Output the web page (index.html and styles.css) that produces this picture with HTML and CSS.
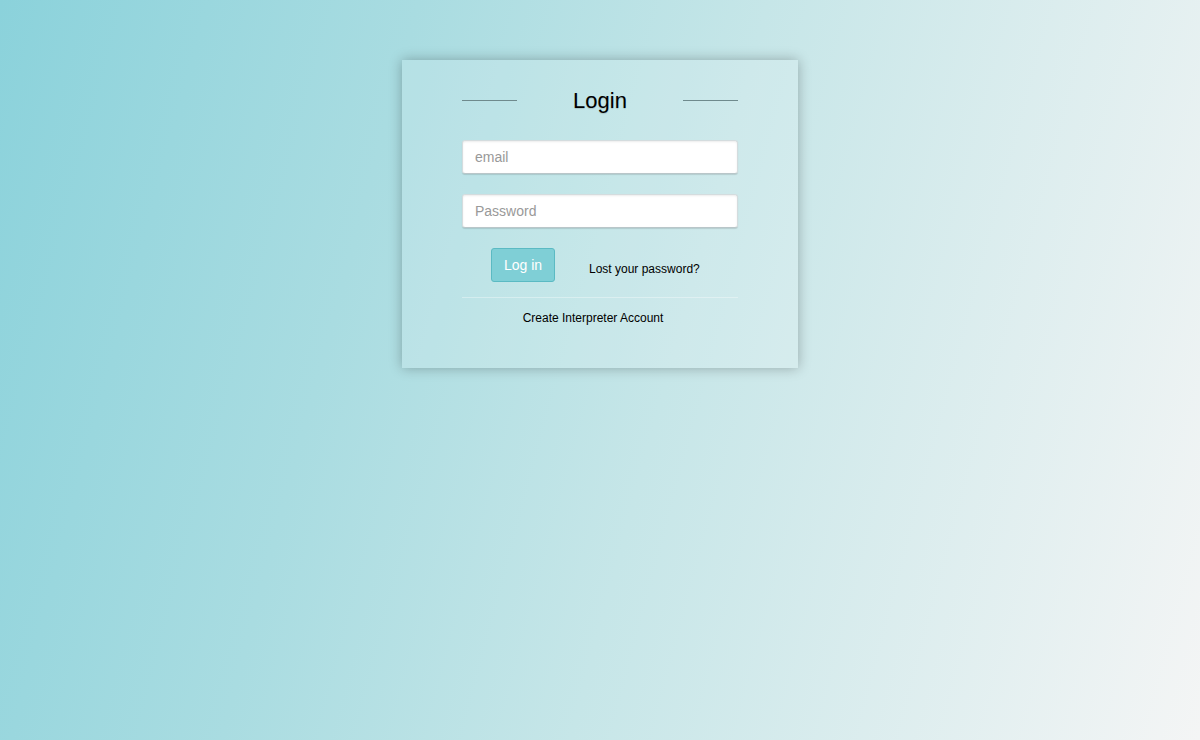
FILE: index.html
```html
<!DOCTYPE html>
<html lang="en">
<head>
<meta charset="utf-8">
<title>Login</title>
<link rel="stylesheet" href="styles.css">
</head>
<body>
<div class="page">
  <form class="card">
    <div class="head">
      <span class="rule"></span>
      <h1 class="title">Login</h1>
      <span class="rule"></span>
    </div>
    <input class="field" type="text" placeholder="email">
    <input class="field" type="password" placeholder="Password">
    <div class="actions">
      <button class="btn" type="button">Log in</button>
      <a class="link lost" href="#">Lost your password?</a>
    </div>
    <div class="sep"></div>
    <div class="create"><a class="link" href="#">Create Interpreter Account</a></div>
  </form>
</div>
</body>
</html>
```
FILE: styles.css
```css
html, body {
  margin: 0;
  height: 100%;
}
body {
  font-family: "Liberation Sans", Arial, sans-serif;
  background: linear-gradient(105deg, #8bd2db 0%, #a9dce1 30%, #c6e6e8 55%, #f4f5f5 100%);
  background-attachment: fixed;
}
.page {
  display: flex;
  justify-content: center;
  padding-top: 60px;
}
.card {
  width: 396px;
  box-sizing: border-box;
  padding: 26px 60px 43px;
  background: rgba(255, 255, 255, 0.14);
  box-shadow: 0 0 12px rgba(0, 0, 0, 0.28);
  display: flex;
  flex-direction: column;
}
.head {
  display: flex;
  align-items: center;
  justify-content: space-between;
  height: 28px;
}
.rule {
  width: 55px;
  height: 1px;
  background: #6f8a8d;
}
.title {
  margin: 0;
  padding-top: 2px;
  font-weight: normal;
  font-size: 22px;
  line-height: 26px;
  color: #000;
  text-shadow: 0 1px 1px rgba(0, 0, 0, 0.15);
}
.field {
  margin: 26px 0 0;
  height: 34px;
  box-sizing: border-box;
  width: 100%;
  padding: 0 12px;
  border: 1px solid #d4dcde;
  border-bottom-color: #b9c6c9;
  border-radius: 3px;
  background: #fff;
  box-shadow: inset 0 1px 2px rgba(0, 0, 0, 0.08), 0 1px 1px rgba(0, 0, 0, 0.12);
  font-family: "Liberation Sans", Arial, sans-serif;
  font-size: 14px;
  color: #333;
  outline: none;
}
.field + .field {
  margin-top: 20px;
}
.field::placeholder {
  color: #999;
}
.actions {
  display: flex;
  align-items: center;
  margin-top: 20px;
  padding-left: 29px;
  gap: 34px;
}
.btn {
  width: 64px;
  height: 34px;
  box-sizing: border-box;
  border: 1px solid #5bbac3;
  border-radius: 3px;
  background: #7fcfd6;
  color: #fff;
  font-family: "Liberation Sans", Arial, sans-serif;
  font-size: 14px;
  padding: 0;
  line-height: 30px;
}
.link {
  color: #000;
  font-size: 12px;
  text-decoration: none;
}
.lost {
  margin-top: 7px;
}
.sep {
  height: 1px;
  margin-top: 15px;
  background: rgba(255, 255, 255, 0.35);
}
.create {
  margin-top: 12px;
  text-align: center;
  padding-right: 14px;
  line-height: 14px;
}
```
